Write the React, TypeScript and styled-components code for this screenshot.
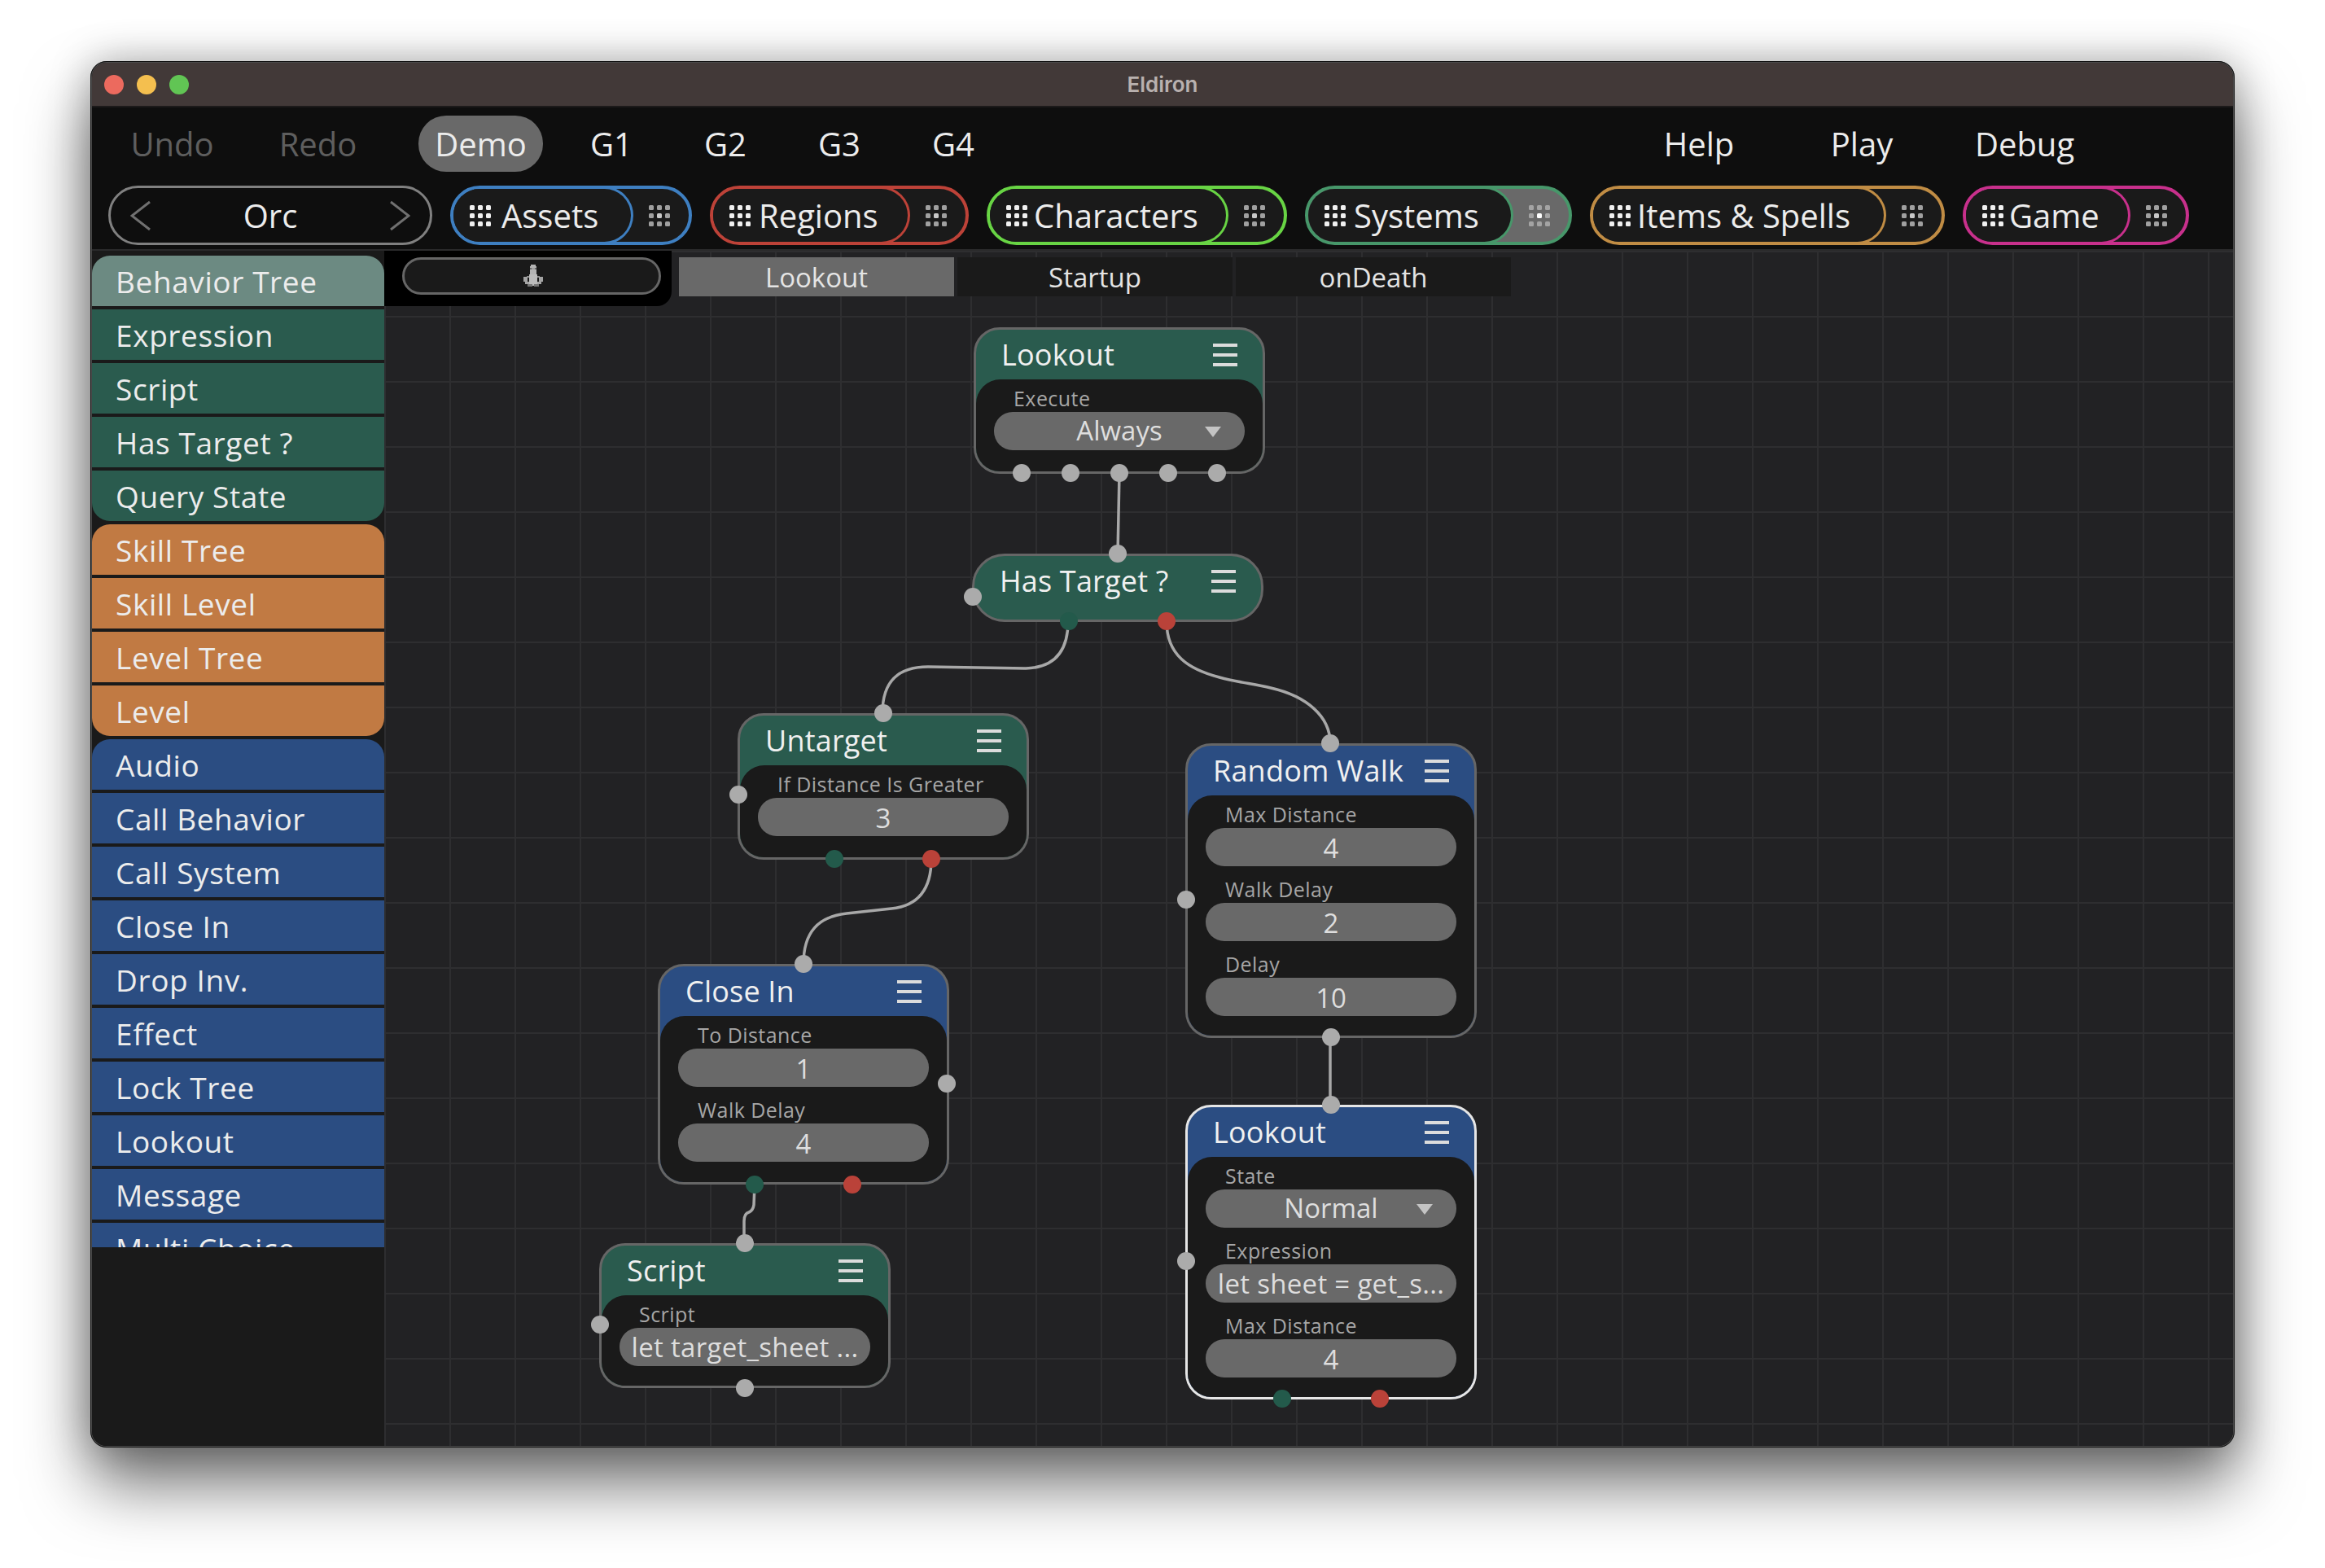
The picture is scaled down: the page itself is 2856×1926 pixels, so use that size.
import styled, { createGlobalStyle } from "styled-components";

const FONT = `"Open Sans", "Liberation Sans", sans-serif`;
const GREEN = "#2a5b4e";
const ORANGE = "#c17a43";
const BLUE = "#2b4d82";
const SELECTED = "#6c8a82";
const TERMINAL_GREEN = "#235a4b";
const TERMINAL_RED = "#ba4239";
const TERMINAL_GRAY = "#ababab";

// window content starts at these page coordinates, node data below is in page pixels
const CANVAS_X = 472;
const CANVAS_Y = 308;

const GlobalStyle = createGlobalStyle`
  html, body {
    margin: 0;
    padding: 0;
    background: #fff;
    overflow: hidden;
  }
  * {
    box-sizing: border-box;
  }
`;

const Page = styled.div`
  width: 2856px;
  height: 1926px;
  padding: 75px 111px 148px;
  background: #fff;
  font-family: ${FONT};
`;

const Window = styled.div`
  width: 100%;
  height: 100%;
  display: flex;
  flex-direction: column;
  overflow: hidden;
  border: 2px solid #4c4c4c;
  border-radius: 20px;
  background: #1a1a1a;
  outline: 1px solid #111;
  outline-offset: -1px;
  box-shadow: 0 46px 80px rgba(0, 0, 0, 0.55), 0 0 50px rgba(0, 0, 0, 0.28);
`;

const TitleBar = styled.div`
  height: 55px;
  flex: none;
  position: relative;
  display: flex;
  align-items: center;
  justify-content: center;
  background: #423938;
  border-bottom: 2px solid #1c1a1a;
`;

const Lights = styled.div`
  position: absolute;
  left: 15px;
  top: 15px;
  display: flex;
  gap: 16px;
`;

const Light = styled.span<{ $color: string }>`
  width: 24px;
  height: 24px;
  border-radius: 50%;
  background: ${(p) => p.$color};
`;

const WindowTitle = styled.div`
  font-family: Inter, "Liberation Sans", sans-serif;
  font-size: 26px;
  font-weight: 600;
  color: #b9b1af;
`;

const Toolbar = styled.div`
  height: 176px;
  flex: none;
  display: flex;
  flex-direction: column;
  gap: 17px;
  padding: 10px 0 0 20px;
  background: #0e0e0e;
  border-bottom: 2px solid #2a2a2b;
`;

const NavRow = styled.div`
  height: 69px;
  display: flex;
  gap: 22px;
`;

const NavGroup = styled.div<{ $left?: number; $right?: number; $auto?: boolean }>`
  display: flex;
  gap: 22px;
  margin-left: ${(p) => (p.$auto ? "auto" : `${p.$left ?? 0}px`)};
  margin-right: ${(p) => p.$right ?? 0}px;
`;

const NavButton = styled.div<{ $w: number; $dim?: boolean; $active?: boolean }>`
  width: ${(p) => p.$w}px;
  height: 69px;
  display: flex;
  align-items: center;
  justify-content: center;
  border-radius: 34px;
  font-size: 40px;
  color: ${(p) => (p.$dim ? "#5e5e5e" : "#ececec")};
  background: ${(p) => (p.$active ? "#696969" : "transparent")};
`;

const PillRow = styled.div`
  height: 73px;
  display: flex;
  gap: 22px;
`;

const CharacterPill = styled.div`
  width: 398px;
  display: flex;
  align-items: center;
  justify-content: space-between;
  padding: 0 24px;
  border: 3px solid #808080;
  border-radius: 37px;
  font-size: 40px;
  color: #ececec;
`;

const Pill = styled.div<{ $w: number; $color: string; $active?: boolean }>`
  width: ${(p) => p.$w}px;
  display: flex;
  overflow: hidden;
  border: 4px solid ${(p) => p.$color};
  border-radius: 37px;
  background: ${(p) => (p.$active ? "#696969" : "#1a1a1a")};
`;

const PillMain = styled.div<{ $color: string; $gap: number }>`
  flex: 1;
  margin: -3px 0;
  display: flex;
  align-items: center;
  gap: ${(p) => p.$gap}px;
  padding-left: 20px;
  border: 3px solid ${(p) => p.$color};
  border-left: none;
  border-radius: 0 37px 37px 0;
  background: #1a1a1a;
  font-size: 40px;
  color: #ececec;
`;

const PillSide = styled.div`
  width: 68px;
  flex: none;
  display: flex;
  align-items: center;
  justify-content: center;
  padding-right: 4px;
`;

const Body = styled.div`
  flex: 1;
  min-height: 0;
  display: flex;
`;

const Sidebar = styled.div`
  width: 359px;
  flex: none;
  padding-top: 6px;
  background: #1a1a1a;
`;

const SidebarList = styled.div`
  height: 1218px;
  display: flex;
  flex-direction: column;
  gap: 4px;
  overflow: hidden;
`;

const SidebarItem = styled.div<{ $bg: string; $first?: boolean; $last?: boolean }>`
  height: 62px;
  flex: none;
  display: flex;
  align-items: center;
  padding: 1px 0 0 29px;
  background: ${(p) => p.$bg};
  border-radius: ${(p) => (p.$first ? "22px 22px" : "0 0")} ${(p) => (p.$last ? "22px 22px" : "0 0")};
  font-size: 37px;
  letter-spacing: 0.6px;
  color: #ececec;
`;

const Canvas = styled.div`
  flex: 1;
  position: relative;
  overflow: hidden;
  background-color: #222224;
  background-image:
    linear-gradient(to right, #2e2e30 2px, transparent 2px),
    linear-gradient(to bottom, #2e2e30 2px, transparent 2px);
  background-size: 80px 80px;
`;

const TabBar = styled.div`
  display: flex;
  gap: 4px;
  align-items: flex-start;
`;

const BehaviorSlot = styled.div`
  width: 353px;
  height: 68px;
  flex: none;
  margin-right: 5px;
  padding: 8px 0 0 22px;
  background: #000;
  border-radius: 0 0 18px 0;
`;

const BehaviorPill = styled.div`
  width: 318px;
  height: 46px;
  display: flex;
  align-items: center;
  justify-content: center;
  padding-left: 4px;
  border: 3px solid #666;
  border-radius: 23px;
  background: #1a1a1a;
`;

const Tab = styled.div<{ $active?: boolean }>`
  width: 338px;
  height: 48px;
  margin-top: 8px;
  display: flex;
  align-items: center;
  justify-content: center;
  background: ${(p) => (p.$active ? "#696969" : "#1a1a1a")};
  font-size: 33px;
  color: #e4e4e4;
`;

const Wires = styled.svg`
  position: absolute;
  left: 0;
  top: 0;
  width: 100%;
  height: 100%;
`;

const Wire = styled.path`
  fill: none;
  stroke: #a8a8a8;
  stroke-width: 3.5;
`;

const Node = styled.div<{ $x: number; $y: number; $h: number; $bg: string; $selected?: boolean; $round?: boolean }>`
  position: absolute;
  left: ${(p) => p.$x - CANVAS_X}px;
  top: ${(p) => p.$y - CANVAS_Y}px;
  width: 358px;
  height: ${(p) => p.$h}px;
  display: flex;
  flex-direction: column;
  overflow: hidden;
  border: 3px solid ${(p) => (p.$selected ? "#e6e6e6" : "#666")};
  border-radius: ${(p) => (p.$round ? "40px" : "32px")};
  background: ${(p) => p.$bg};
`;

const NodeHeader = styled.div`
  height: 61px;
  flex: none;
  display: flex;
  align-items: center;
  justify-content: space-between;
  padding: 0 31px 0 31px;
  font-size: 36px;
  letter-spacing: 0.2px;
  color: #f0f0f0;
`;

const Burger = styled.div`
  width: 30px;
  height: 28px;
  flex: none;
  display: flex;
  flex-direction: column;
  justify-content: space-between;

  span {
    height: 4px;
    background: #dcdcdc;
  }
`;

const NodeBody = styled.div`
  flex: 1;
  display: flex;
  flex-direction: column;
  gap: 5px;
  padding: 0 22px;
  background: #1a1a1a;
  border-radius: 30px 30px 0 0;
`;

const Field = styled.div``;

const FieldLabel = styled.div`
  height: 40px;
  display: flex;
  align-items: flex-end;
  padding: 0 0 2px 24px;
  font-size: 25px;
  line-height: 30px;
  letter-spacing: 0.45px;
  color: #a6a6a6;
  white-space: nowrap;
`;

const FieldValue = styled.div<{ $kind: "number" | "select" | "code" }>`
  position: relative;
  height: 47px;
  display: flex;
  align-items: center;
  justify-content: center;
  overflow: hidden;
  padding: ${(p) => (p.$kind === "number" ? "2px 0 0" : p.$kind === "select" ? "0 0 2px" : "0")};
  border-radius: 23px;
  background: #696969;
  font-size: 33px;
  letter-spacing: ${(p) => (p.$kind === "code" ? "0.3px" : "0")};
  color: #dedede;
  white-space: nowrap;
`;

const Caret = styled.span`
  position: absolute;
  right: 29px;
  top: 18px;
  width: 0;
  height: 0;
  border-left: 10px solid transparent;
  border-right: 10px solid transparent;
  border-top: 13px solid #c4c4c4;
`;

const Terminal = styled.span<{ $x: number; $y: number; $color: string }>`
  position: absolute;
  left: ${(p) => p.$x - CANVAS_X - 11}px;
  top: ${(p) => p.$y - CANVAS_Y - 11}px;
  width: 22px;
  height: 22px;
  border-radius: 50%;
  background: ${(p) => p.$color};
`;

const GridDots = ({ color, center }: { color: string; center?: string }) => (
  <svg width="26" height="26" viewBox="0 0 26 26" style={{ flex: "none" }}>
    {[0, 10, 20].map((y) =>
      [0, 10, 20].map((x) => (
        <rect
          key={`${x}-${y}`}
          x={x}
          y={y}
          width="6"
          height="6"
          rx="1.5"
          fill={center && x === 10 && y === 10 ? center : color}
        />
      ))
    )}
  </svg>
);

const Chevron = ({ right }: { right?: boolean }) => (
  <svg width="26" height="38" viewBox="0 0 26 38">
    <polyline
      points={right ? "2,2 24,19 2,36" : "24,2 2,19 24,36"}
      fill="none"
      stroke="#707070"
      strokeWidth="3"
    />
  </svg>
);

// little pixel figure from the behavior picker
const BehaviorIcon = () => (
  <svg width="26" height="28" viewBox="0 0 26 28" shapeRendering="crispEdges">
    <rect x="10" y="0" width="6" height="2" fill="#b4b4b4" />
    <rect x="9" y="2" width="8" height="2" fill="#b4b4b4" />
    <rect x="9" y="4" width="2" height="2" fill="#686868" />
    <rect x="15" y="4" width="2" height="2" fill="#686868" />
    <rect x="11" y="4" width="4" height="2" fill="#a0a0a0" />
    <rect x="9" y="6" width="8" height="6" fill="#b4b4b4" />
    <rect x="5" y="14" width="16" height="2" fill="#8e8e8e" />
    <rect x="8" y="12" width="10" height="14" fill="#bcbcbc" />
    <rect x="1" y="15" width="5" height="6" fill="#a4a4a4" />
    <rect x="20" y="15" width="5" height="6" fill="#a4a4a4" />
    <rect x="3" y="21" width="5" height="3" fill="#a4a4a4" />
    <rect x="18" y="21" width="5" height="3" fill="#a4a4a4" />
    <rect x="6" y="24" width="6" height="3" fill="#777" />
    <rect x="14" y="24" width="6" height="3" fill="#777" />
  </svg>
);

const games = ["G1", "G2", "G3", "G4"];

const pills = [
  { label: "Assets", w: 297, gap: 13, color: "#3e7fc1" },
  { label: "Regions", w: 318, gap: 10, color: "#bd4238" },
  { label: "Characters", w: 369, gap: 8, color: "#68d444" },
  { label: "Systems", w: 328, gap: 10, color: "#47976a", active: true },
  { label: "Items & Spells", w: 436, gap: 8, color: "#c08c44" },
  { label: "Game", w: 278, gap: 7, color: "#c8308c" },
];

const sidebarItems: { label: string; bg: string; first?: boolean; last?: boolean }[] = [
  { label: "Behavior Tree", bg: SELECTED, first: true },
  { label: "Expression", bg: GREEN },
  { label: "Script", bg: GREEN },
  { label: "Has Target ?", bg: GREEN },
  { label: "Query State", bg: GREEN, last: true },
  { label: "Skill Tree", bg: ORANGE, first: true },
  { label: "Skill Level", bg: ORANGE },
  { label: "Level Tree", bg: ORANGE },
  { label: "Level", bg: ORANGE, last: true },
  { label: "Audio", bg: BLUE, first: true },
  { label: "Call Behavior", bg: BLUE },
  { label: "Call System", bg: BLUE },
  { label: "Close In", bg: BLUE },
  { label: "Drop Inv.", bg: BLUE },
  { label: "Effect", bg: BLUE },
  { label: "Lock Tree", bg: BLUE },
  { label: "Lookout", bg: BLUE },
  { label: "Message", bg: BLUE },
  { label: "Multi Choice", bg: BLUE },
];

type FieldData = { label: string; value: string; kind: "number" | "select" | "code" };

type NodeData = {
  title: string;
  x: number;
  y: number;
  h: number;
  bg: string;
  selected?: boolean;
  fields: FieldData[];
};

const nodes: NodeData[] = [
  {
    title: "Lookout",
    x: 1196,
    y: 402,
    h: 180,
    bg: GREEN,
    fields: [{ label: "Execute", value: "Always", kind: "select" }],
  },
  { title: "Has Target ?", x: 1194, y: 680, h: 84, bg: GREEN, fields: [] },
  {
    title: "Untarget",
    x: 906,
    y: 876,
    h: 180,
    bg: GREEN,
    fields: [{ label: "If Distance Is Greater", value: "3", kind: "number" }],
  },
  {
    title: "Random Walk",
    x: 1456,
    y: 913,
    h: 362,
    bg: BLUE,
    fields: [
      { label: "Max Distance", value: "4", kind: "number" },
      { label: "Walk Delay", value: "2", kind: "number" },
      { label: "Delay", value: "10", kind: "number" },
    ],
  },
  {
    title: "Close In",
    x: 808,
    y: 1184,
    h: 271,
    bg: BLUE,
    fields: [
      { label: "To Distance", value: "1", kind: "number" },
      { label: "Walk Delay", value: "4", kind: "number" },
    ],
  },
  {
    title: "Lookout",
    x: 1456,
    y: 1357,
    h: 362,
    bg: BLUE,
    selected: true,
    fields: [
      { label: "State", value: "Normal", kind: "select" },
      { label: "Expression", value: "let sheet = get_s...", kind: "code" },
      { label: "Max Distance", value: "4", kind: "number" },
    ],
  },
  {
    title: "Script",
    x: 736,
    y: 1527,
    h: 178,
    bg: GREEN,
    fields: [{ label: "Script", value: "let target_sheet ...", kind: "code" }],
  },
];

const terminals: [number, number, string][] = [
  [1255, 581, TERMINAL_GRAY],
  [1315, 581, TERMINAL_GRAY],
  [1375, 581, TERMINAL_GRAY],
  [1435, 581, TERMINAL_GRAY],
  [1495, 581, TERMINAL_GRAY],
  [1373, 680, TERMINAL_GRAY],
  [1195, 733, TERMINAL_GRAY],
  [1313, 763, TERMINAL_GREEN],
  [1433, 763, TERMINAL_RED],
  [1085, 876, TERMINAL_GRAY],
  [907, 976, TERMINAL_GRAY],
  [1025, 1055, TERMINAL_GREEN],
  [1144, 1055, TERMINAL_RED],
  [1634, 913, TERMINAL_GRAY],
  [1457, 1105, TERMINAL_GRAY],
  [1635, 1274, TERMINAL_GRAY],
  [987, 1184, TERMINAL_GRAY],
  [1163, 1331, TERMINAL_GRAY],
  [927, 1455, TERMINAL_GREEN],
  [1047, 1455, TERMINAL_RED],
  [1635, 1357, TERMINAL_GRAY],
  [1457, 1549, TERMINAL_GRAY],
  [1575, 1718, TERMINAL_GREEN],
  [1695, 1718, TERMINAL_RED],
  [915, 1527, TERMINAL_GRAY],
  [737, 1627, TERMINAL_GRAY],
  [915, 1705, TERMINAL_GRAY],
];

const wires = [
  "M1375 581 L1373 680",
  "M1312 763 C1312 800 1295 820 1260 821 L1140 819 C1105 819 1084 835 1084 876",
  "M1433 763 C1433 805 1460 822 1498 832 C1520 838 1540 840 1561 845 C1605 855 1634 880 1634 913",
  "M1144 1055 C1144 1095 1125 1113 1095 1116 L1040 1122 C1005 1126 987 1145 987 1184",
  "M927 1455 L926 1480 C925 1487 922 1488 920 1489 C916 1490 914 1493 914 1500 L914 1527",
  "M1634 1274 L1634 1357",
];

const App = () => {
  return (
    <Page>
      <GlobalStyle />
      <Window>
        <TitleBar>
          <Lights>
            <Light $color="#ec6a5e" />
            <Light $color="#f4bf4f" />
            <Light $color="#61c554" />
          </Lights>
          <WindowTitle>Eldiron</WindowTitle>
        </TitleBar>
        <Toolbar>
          <NavRow>
            <NavGroup $right={23}>
              <NavButton $w={157} $dim>Undo</NavButton>
              <NavButton $w={157} $dim>Redo</NavButton>
            </NavGroup>
            <NavButton $w={153} $active>Demo</NavButton>
            <NavGroup $left={3}>
              {games.map((label) => (
                <NavButton key={label} $w={118}>{label}</NavButton>
              ))}
            </NavGroup>
            <NavGroup $auto $right={167}>
              <NavButton $w={178}>Help</NavButton>
              <NavButton $w={178}>Play</NavButton>
              <NavButton $w={178}>Debug</NavButton>
            </NavGroup>
          </NavRow>
          <PillRow>
            <CharacterPill>
              <Chevron />
              Orc
              <Chevron right />
            </CharacterPill>
            {pills.map((pill) => (
              <Pill key={pill.label} $w={pill.w} $color={pill.color} $active={pill.active}>
                <PillMain $color={pill.color} $gap={pill.gap}>
                  <GridDots color="#f0f0f0" />
                  {pill.label}
                </PillMain>
                <PillSide>
                  <GridDots
                    color={pill.active ? "#a4a4a4" : "#a0a0a0"}
                    center={pill.active ? "#ffffff" : "#c8c8c8"}
                  />
                </PillSide>
              </Pill>
            ))}
          </PillRow>
        </Toolbar>
        <Body>
          <Sidebar>
            <SidebarList>
              {sidebarItems.map((item) => (
                <SidebarItem key={item.label} $bg={item.bg} $first={item.first} $last={item.last}>
                  {item.label}
                </SidebarItem>
              ))}
            </SidebarList>
          </Sidebar>
          <Canvas>
            <TabBar>
              <BehaviorSlot>
                <BehaviorPill>
                  <BehaviorIcon />
                </BehaviorPill>
              </BehaviorSlot>
              <Tab $active>Lookout</Tab>
              <Tab>Startup</Tab>
              <Tab>onDeath</Tab>
            </TabBar>
            <Wires viewBox={`${CANVAS_X} ${CANVAS_Y} 2271 1468`} preserveAspectRatio="xMinYMin meet">
              {wires.map((d) => (
                <Wire key={d} d={d} />
              ))}
            </Wires>
            {nodes.map((node) => (
              <Node
                key={`${node.title}-${node.x}`}
                $x={node.x}
                $y={node.y}
                $h={node.h}
                $bg={node.bg}
                $selected={node.selected}
                $round={node.fields.length === 0}
              >
                <NodeHeader>
                  {node.title}
                  <Burger>
                    <span />
                    <span />
                    <span />
                  </Burger>
                </NodeHeader>
                {node.fields.length > 0 && (
                  <NodeBody>
                    {node.fields.map((field) => (
                      <Field key={field.label}>
                        <FieldLabel>{field.label}</FieldLabel>
                        <FieldValue $kind={field.kind}>
                          {field.value}
                          {field.kind === "select" && <Caret />}
                        </FieldValue>
                      </Field>
                    ))}
                  </NodeBody>
                )}
              </Node>
            ))}
            {terminals.map(([x, y, color]) => (
              <Terminal key={`${x}-${y}`} $x={x} $y={y} $color={color} />
            ))}
          </Canvas>
        </Body>
      </Window>
    </Page>
  );
};

export default App;
